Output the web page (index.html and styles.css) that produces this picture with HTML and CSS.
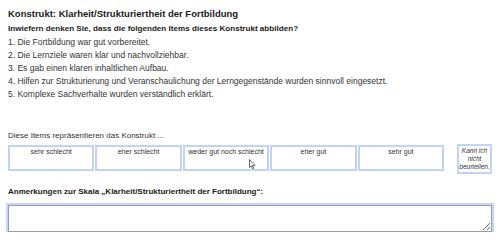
FILE: index.html
```
<!DOCTYPE html>
<html lang="de">
<head>
<meta charset="utf-8">
<link rel="stylesheet" href="styles.css">
</head>
<body>
<div class="page">
  <h1 class="title">Konstrukt: Klarheit/Strukturiertheit der Fortbildung</h1>
  <p class="question">Inwiefern denken Sie, dass die folgenden Items dieses Konstrukt abbilden?</p>
  <ol class="items">
    <li>1. Die Fortbildung war gut vorbereitet.</li>
    <li>2. Die Lernziele waren klar und nachvollziehbar.</li>
    <li>3. Es gab einen klaren inhaltlichen Aufbau.</li>
    <li>4. Hilfen zur Strukturierung und Veranschaulichung der Lerngegenstände wurden sinnvoll eingesetzt.</li>
    <li>5. Komplexe Sachverhalte wurden verständlich erklärt.</li>
  </ol>
  <p class="prompt">Diese Items repräsentieren das Konstrukt ...</p>
  <div class="scale">
    <div class="options">
      <div class="opt">sehr schlecht</div>
      <div class="opt">eher schlecht</div>
      <div class="opt hover">weder gut noch schlecht
        <svg class="cursor" width="7" height="11" viewBox="0 0 7 11"><path d="M0.5 0.5 L0.5 8.5 L2.3 6.8 L3.6 9.8 L4.8 9.3 L3.5 6.4 L6 6.4 Z" fill="#fff" stroke="#444" stroke-width="0.8" stroke-linejoin="round"/></svg>
      </div>
      <div class="opt">eher gut</div>
      <div class="opt">sehr gut</div>
    </div>
    <div class="opt na">Kann ich nicht beurteilen.</div>
  </div>
  <p class="label">Anmerkungen zur Skala „Klarheit/Strukturiertheit der Fortbildung“:</p>
  <textarea class="notes"></textarea>
</div>
</body>
</html>
```
FILE: styles.css
```
* { box-sizing: border-box; }
body {
  margin: 0;
  background: #fff;
  font-family: "Liberation Sans", Arial, sans-serif;
  color: #222;
}
.page {
  padding: 7px 8px 0 8px;
}
.title {
  margin: 0;
  font-size: 9.5px;
  font-weight: bold;
  line-height: 13px;
  color: #1a1a1a;
}
.question {
  margin: 3px 0 0 0;
  font-size: 8.1px;
  font-weight: bold;
  line-height: 12px;
  color: #1a1a1a;
}
.items {
  list-style: none;
  margin: 1px 0 0 0;
  padding: 0;
  font-size: 8.5px;
  line-height: 13.1px;
  color: #333;
}
.prompt {
  margin: 29px 0 0 0;
  font-size: 8px;
  line-height: 12px;
  color: #333;
}
.scale {
  display: flex;
  align-items: flex-start;
  margin-top: 3px;
}
.options {
  display: flex;
  gap: 1px;
  width: 436px;
}
.opt {
  flex: 1;
  height: 26px;
  border: 2px solid #c3d3f6;
  background: #fff;
  font-size: 7px;
  line-height: 9px;
  text-align: center;
  padding-top: 0;
  color: #333;
}
.hover {
  position: relative;
}
.cursor {
  position: absolute;
  left: 64px;
  top: 12px;
}
.na {
  flex: 0 0 35px;
  height: 30px;
  margin-left: 13px;
  margin-top: -1px;
  font-style: italic;
  font-size: 6.5px;
  line-height: 8px;
  padding-top: 1px;
}
.label {
  margin: 12px 0 0 0;
  font-size: 8px;
  font-weight: bold;
  line-height: 12px;
  color: #1a1a1a;
}
.notes {
  display: block;
  margin-top: 7px;
  width: 484px;
  height: 27px;
  border: 1px solid #9a9ab0;
  box-shadow: 0 0 0 2px #c6d6f8;
  resize: vertical;
  padding: 0;
}
```
